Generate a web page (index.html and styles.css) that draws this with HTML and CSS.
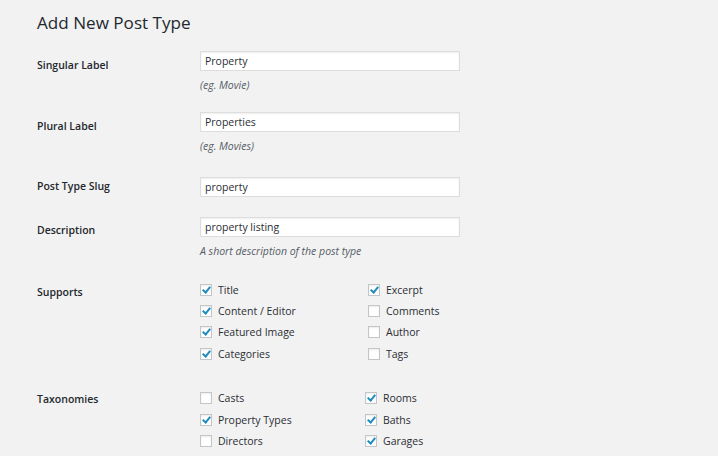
FILE: index.html
```html
<!DOCTYPE html>
<html>
<head>
<meta charset="utf-8">
<link rel="stylesheet" href="styles.css">
</head>
<body>
<div class="wrap">
  <h1 class="title">Add New Post Type</h1>

  <div class="row r1">
    <div class="label">Singular Label</div>
    <div class="field">
      <div class="input">Property</div>
      <div class="hint">(eg. Movie)</div>
    </div>
  </div>

  <div class="row r2">
    <div class="label">Plural Label</div>
    <div class="field">
      <div class="input">Properties</div>
      <div class="hint">(eg. Movies)</div>
    </div>
  </div>

  <div class="row r3">
    <div class="label">Post Type Slug</div>
    <div class="field">
      <div class="input">property</div>
    </div>
  </div>

  <div class="row r4">
    <div class="label">Description</div>
    <div class="field">
      <div class="input">property listing</div>
      <div class="hint">A short description of the post type</div>
    </div>
  </div>

  <div class="row r5">
    <div class="label">Supports</div>
    <div class="checks supports">
      <div class="check"><span class="box on"></span>Title</div>
      <div class="check"><span class="box on"></span>Excerpt</div>
      <div class="check"><span class="box on"></span>Content / Editor</div>
      <div class="check"><span class="box"></span>Comments</div>
      <div class="check"><span class="box on"></span>Featured Image</div>
      <div class="check"><span class="box"></span>Author</div>
      <div class="check"><span class="box on"></span>Categories</div>
      <div class="check"><span class="box"></span>Tags</div>
    </div>
  </div>

  <div class="row r6">
    <div class="label">Taxonomies</div>
    <div class="checks taxes">
      <div class="check"><span class="box"></span>Casts</div>
      <div class="check"><span class="box on"></span>Rooms</div>
      <div class="check"><span class="box on"></span>Property Types</div>
      <div class="check"><span class="box on"></span>Baths</div>
      <div class="check"><span class="box"></span>Directors</div>
      <div class="check"><span class="box on"></span>Garages</div>
    </div>
  </div>
</div>
</body>
</html>
```

FILE: styles.css
```css
html, body {
  margin: 0;
  padding: 0;
  background: #f2f2f2;
  overflow: hidden;
}
body {
  font-family: "Open Sans", "Liberation Sans", sans-serif;
  color: #23282d;
  font-size: 10.5px;
}
.wrap {
  padding: 9px 0 0 37px;
}
.title {
  margin: 0;
  font-size: 17.1px;
  font-weight: 400;
  line-height: 28px;
  color: #23282d;
}
.row {
  display: flex;
}
.label {
  width: 163px;
  font-weight: 600;
  font-size: 10.5px;
  line-height: 16px;
  flex: none;
}
.field {
  display: flex;
  flex-direction: column;
}
.input {
  width: 254px;
  height: 18px;
  border: 1px solid #dddddd;
  background: #fff;
  box-shadow: inset 0 1px 2px rgba(0,0,0,0.07);
  padding: 0 0 0 4px;
  line-height: 18px;
  font-size: 10.5px;
  color: #2a2e33;
}
.hint {
  font-style: italic;
  font-size: 10.5px;
  color: #555d66;
  line-height: 16px;
  margin-top: 6px;
}
.r1 { margin-top: 14px; }
.r1 .label { padding-top: 6px; }
.r2 { margin-top: 19px; }
.r2 .label { padding-top: 6px; }
.r3 { margin-top: 23px; }
.r3 .label { padding-top: 1px; }
.r4 { margin-top: 20px; }
.r4 .label { padding-top: 5px; }
.r5 { margin-top: 25px; }
.r5 .label { padding-top: 0; }
.r6 { margin-top: 23px; }
.r6 .label { margin-top: -2px; }

.checks {
  display: grid;
  grid-auto-rows: 21.4px;
}
.supports { grid-template-columns: 168px auto; }
.taxes { grid-template-columns: 165px auto; }
.check {
  display: flex;
  align-items: center;
  height: 21.4px;
  font-size: 10.5px;
  color: #2a2e33;
  margin-top: -5px;
}
.box {
  width: 10px;
  height: 10px;
  border: 1px solid #c3c6c9;
  background: #fff;
  box-shadow: inset 0 1px 2px rgba(0,0,0,0.08);
  margin-right: 6px;
  flex: none;
  position: relative;
}
.box.on::after {
  content: "";
  position: absolute;
  left: 3px;
  top: 0px;
  width: 3px;
  height: 6px;
  border-right: 2px solid #1e8cbe;
  border-bottom: 2px solid #1e8cbe;
  transform: rotate(40deg);
}
```
